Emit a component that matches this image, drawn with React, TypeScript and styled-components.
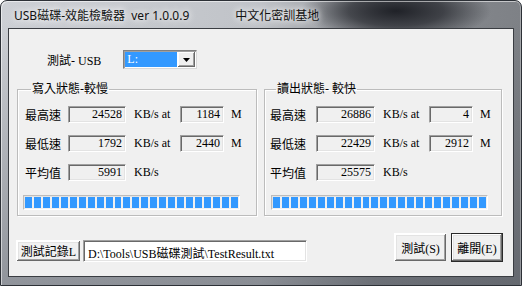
import React from "react";
import styled, { createGlobalStyle, css } from "styled-components";

const GlobalStyle = createGlobalStyle`
  html, body {
    margin: 0;
    padding: 0;
    background: #ffffff;
  }
  body {
    font-family: "Liberation Serif", "Noto Sans CJK TC", serif;
    font-size: 12px;
  }
`;

const Window = styled.div`
  width: 522px;
  height: 286px;
  box-sizing: border-box;
  display: flex;
  flex-direction: column;
  padding: 0 7px 8px 7px;
  border: 1px solid #2c3036;
  border-radius: 7px 7px 0 0;
  background:
    radial-gradient(ellipse 95px 30px at 395px 10px, rgba(26, 28, 34, 0.95) 0%, rgba(26, 28, 34, 0.65) 50%, rgba(26, 28, 34, 0) 100%),
    linear-gradient(to bottom, rgba(70, 75, 84, 0) 20px, rgba(70, 75, 84, 0.45) 100%),
    linear-gradient(to right, #cdd0d5 0%, #c0c3c8 50%, #8a8d92 72%, #7e8186 100%);
  box-shadow: inset 1px 1px 0 rgba(255, 255, 255, 0.55), inset -1px 0 0 rgba(255, 255, 255, 0.3);
`;

const TitleBar = styled.div`
  height: 27px;
  flex: none;
  display: flex;
  align-items: center;
  padding-left: 6px;
  font-family: "Noto Sans", "Noto Sans CJK TC", sans-serif;
  font-size: 12px;
  color: #111;
  white-space: pre;
`;

const TitleText = styled.span<{ $gap?: number }>`
  margin-left: ${(p) => p.$gap ?? 0}px;
  text-shadow: 0 0 6px rgba(255, 255, 255, 0.95), 0 0 10px rgba(255, 255, 255, 0.8);
`;

const Client = styled.div`
  flex: 1;
  display: flex;
  flex-direction: column;
  border: 1px solid #3a3d42;
  background: #f0f0f0;
  color: #000;
`;

const DriveRow = styled.div`
  display: flex;
  align-items: center;
  padding: 21px 0 0 38px;
  height: 19px;
`;

const Combo = styled.div`
  margin-left: 22px;
  width: 74px;
  height: 19px;
  box-sizing: border-box;
  display: flex;
  padding: 1px;
  border: 1px solid #808080;
  border-right-color: #d8d8d8;
  border-bottom-color: #d8d8d8;
  box-shadow: inset 1px 1px 0 #a0a0a0;
  background: #fff;
`;

const ComboValue = styled.div`
  width: 50px;
  background: #3399ff;
  color: #fff;
  padding-left: 2px;
  line-height: 15px;
`;

const ComboArrow = styled.div`
  margin-left: auto;
  width: 17px;
  box-sizing: border-box;
  display: flex;
  align-items: center;
  justify-content: center;
  background: #f0f0f0;
  box-shadow: inset -1px -1px 0 #696969, inset 1px 1px 0 #fff, inset -2px -2px 0 #a0a0a0;
`;

const Groups = styled.div`
  display: flex;
  gap: 7px;
  margin: 13px 0 0 8px;
`;

const Group = styled.fieldset<{ $width: number; $pad: number }>`
  margin: 0;
  width: ${(p) => p.$width}px;
  box-sizing: border-box;
  padding: 10px 4px 5px ${(p) => p.$pad}px;
  border: 1px solid #bcbcbc;
  box-shadow: inset 1px 1px 0 #fff, 1px 1px 0 #fff;
  display: flex;
  flex-direction: column;
  gap: 12px;
`;

const Legend = styled.legend`
  padding: 0 1px;
  margin-left: 6px;
  line-height: 14px;
`;

const StatRow = styled.div`
  display: flex;
  align-items: center;
  height: 17px;
`;

const Label = styled.span<{ $width: number }>`
  width: ${(p) => p.$width}px;
  flex: none;
`;

const sunken = css`
  box-sizing: border-box;
  border: 1px solid;
  border-color: #a0a0a0 #ffffff #ffffff #a0a0a0;
  box-shadow: inset 1px 1px 0 #696969, inset -1px -1px 0 #e3e3e3;
`;

const ValueBox = styled.div<{ $width: number }>`
  ${sunken};
  width: ${(p) => p.$width}px;
  height: 17px;
  padding: 0 3px 0 0;
  text-align: right;
  line-height: 14px;
  flex: none;
`;

const Unit = styled.span<{ $gap: number; $width?: number }>`
  margin-left: ${(p) => p.$gap}px;
  ${(p) => p.$width && `width: ${p.$width}px; flex: none;`}
`;

const Progress = styled.div<{ $shift: number }>`
  margin: 2px 0 0 ${(p) => p.$shift}px;
  width: 217px;
  height: 15px;
  box-sizing: border-box;
  border: 1px solid #bcbcbc;
  border-right-color: #fff;
  border-bottom-color: #fff;
  box-shadow: inset 1px 1px 0 #e3e3e3;
  padding: 1px;
  display: flex;
  gap: 2px;
`;

const Block = styled.div`
  width: 7px;
  height: 11px;
  background: #3399ff;
`;

const Footer = styled.div`
  display: flex;
  align-items: flex-end;
  margin-top: auto;
  padding: 0 10px 14px 7px;
`;

const Button = styled.button<{ $default?: boolean; $w: number; $h: number }>`
  width: ${(p) => p.$w}px;
  height: ${(p) => p.$h}px;
  padding: 0;
  font: inherit;
  color: #000;
  background: #f0f0f0;
  border: 1px solid ${(p) => (p.$default ? "#2a2a2a" : "#f0f0f0")};
  box-shadow: inset -1px -1px 0 #696969, inset 1px 1px 0 #fff, inset -2px -2px 0 #a0a0a0, inset 2px 2px 0 #e3e3e3;
  border-top-color: ${(p) => (p.$default ? "#2a2a2a" : "#fff")};
  border-left-color: ${(p) => (p.$default ? "#2a2a2a" : "#fff")};
`;

const PathBox = styled.div`
  ${sunken};
  margin-left: 2px;
  width: 224px;
  height: 22px;
  background: #fff;
  padding: 3px 0 0 4px;
  white-space: nowrap;
  overflow: hidden;
`;

const RightButtons = styled.div`
  margin-left: auto;
  display: flex;
  gap: 4px;
`;

type Stat = { label: string; value: string; at?: string };

const StatGroup = ({
  title,
  stats,
  width,
  pad,
  labelWidth,
  boxWidth,
  shift,
}: {
  title: string;
  stats: Stat[];
  width: number;
  pad: number;
  labelWidth: number;
  boxWidth: number;
  shift: number;
}) => (
  <Group $width={width} $pad={pad}>
    <Legend>{title}</Legend>
    {stats.map((s) => (
      <StatRow key={s.label}>
        <Label $width={labelWidth}>{s.label}</Label>
        <ValueBox $width={boxWidth}>{s.value}</ValueBox>
        {s.at !== undefined ? (
          <>
            <Unit $gap={8} $width={46}>KB/s at</Unit>
            <ValueBox $width={44}>{s.at}</ValueBox>
            <Unit $gap={7}>M</Unit>
          </>
        ) : (
          <Unit $gap={8}>KB/s</Unit>
        )}
      </StatRow>
    ))}
    <Progress $shift={shift}>
      {Array.from({ length: 24 }, (_, i) => (
        <Block key={i} />
      ))}
    </Progress>
  </Group>
);

export default function App() {
  return (
    <>
      <GlobalStyle />
      <Window>
        <TitleBar>
          <TitleText>USB磁碟-效能檢驗器  ver 1.0.0.9</TitleText>
          <TitleText $gap={46}>中文化密訓基地</TitleText>
        </TitleBar>
        <Client>
          <DriveRow>
            <span>測試- USB</span>
            <Combo>
              <ComboValue>L:</ComboValue>
              <ComboArrow>
                <svg width="7" height="4" viewBox="0 0 7 4">
                  <path d="M0 0h7L3.5 4z" fill="#000" />
                </svg>
              </ComboArrow>
            </Combo>
          </DriveRow>
          <Groups>
            <StatGroup
              title="寫入狀態-較慢"
              width={240}
              pad={7}
              labelWidth={43}
              boxWidth={58}
              shift={-2}
              stats={[
                { label: "最高速", value: "24528", at: "1184" },
                { label: "最低速", value: "1792", at: "2440" },
                { label: "平均值", value: "5991" },
              ]}
            />
            <StatGroup
              title="讀出狀態- 較快"
              width={238}
              pad={5}
              labelWidth={46}
              boxWidth={59}
              shift={1}
              stats={[
                { label: "最高速", value: "26886", at: "4" },
                { label: "最低速", value: "22429", at: "2912" },
                { label: "平均值", value: "25575" },
              ]}
            />
          </Groups>
          <Footer>
            <Button $w={65} $h={22}>測試記錄L</Button>
            <PathBox>D:\Tools\USB磁碟測試\TestResult.txt</PathBox>
            <RightButtons>
              <Button $w={53} $h={29}>測試(S)</Button>
              <Button $w={52} $h={29} $default>離開(E)</Button>
            </RightButtons>
          </Footer>
        </Client>
      </Window>
    </>
  );
}
